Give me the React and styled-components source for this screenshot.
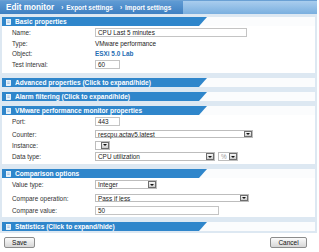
import styled, { createGlobalStyle } from "styled-components";

const GlobalStyle = createGlobalStyle`
  body {
    margin: 0;
    background: #fff;
    font-family: "Liberation Sans", Arial, sans-serif;
  }
`;

const Page = styled.div`
  width: 317px;
`;

const TitleBar = styled.div`
  display: flex;
  height: 14px;
  background: linear-gradient(#a9cdee, #7aafdf);
  border-top: 1px solid #6aa0d4;
  box-sizing: border-box;
`;

const TitleTab = styled.div`
  display: flex;
  align-items: center;
  width: 183px;
  padding-left: 6px;
  box-sizing: border-box;
  background: linear-gradient(#5f9bd4, #3f80c2);
  color: #fff;
  font-weight: bold;
`;

const Title = styled.span`
  font-size: 8.2px;
  margin-right: 7px;
`;

const NavLink = styled.span`
  font-size: 6.4px;
  margin-right: 7px;
  &::before {
    content: "›";
    margin-right: 3px;
  }
`;

const Panel = styled.div`
  display: flex;
  flex-direction: column;
  gap: 5px;
  background: #dde8f2;
  padding: 3px 2px 2px;
`;

const Section = styled.div`
  background: #fbfcfd;
`;

const Tab = styled.div`
  display: flex;
  align-items: center;
  gap: 4px;
  width: 205px;
  height: 9px;
  padding-left: 4px;
  box-sizing: border-box;
  background: #2f86cb;
  clip-path: polygon(0 0, 100% 0, calc(100% - 8px) 100%, 0 100%);
  color: #fff;
  font-weight: bold;
  font-size: 6.6px;
  white-space: nowrap;
`;

const Body = styled.div`
  padding: ${(p) => p.$pad || "1px 0 2px 10px"};
  background: #fff;
`;

const Row = styled.div`
  display: grid;
  grid-template-columns: 83px auto;
  align-items: center;
  height: ${(p) => p.$h || 10}px;
  font-size: 6.4px;
`;

const Label = styled.span`
  color: #333;
`;

const Value = styled.div`
  display: flex;
  align-items: center;
  gap: 3px;
  color: #222;
`;

const Link = styled.span`
  color: #1f6db3;
  font-weight: bold;
`;

const Input = styled.div`
  width: ${(p) => p.$w}px;
  height: 9px;
  border: 1px solid #c4c4c4;
  box-sizing: border-box;
  padding-left: 2px;
  display: flex;
  align-items: center;
  background: #fff;
  color: #222;
`;

const SelectBox = styled.div`
  width: ${(p) => p.$w}px;
  height: 8.5px;
  border: 1px solid #bdbdbd;
  box-sizing: border-box;
  padding-left: 2px;
  display: flex;
  align-items: center;
  justify-content: space-between;
  background: #fff;
  color: ${(p) => (p.$muted ? "#999" : "#222")};
`;

const DropBtn = styled.span`
  width: 8px;
  height: 6.5px;
  margin-right: 0.5px;
  box-sizing: border-box;
  border: 1px solid #6e6e6e;
  background: linear-gradient(#f6f6f6, #cdcdcd);
  display: flex;
  align-items: center;
  justify-content: center;
  &::after {
    content: "";
    border-left: 2px solid transparent;
    border-right: 2px solid transparent;
    border-top: 2px solid #111;
  }
`;

const Footer = styled.div`
  display: flex;
  justify-content: space-between;
  padding: 4px 10px 0 4px;
`;

const Button = styled.button`
  width: ${(p) => p.$w}px;
  height: 11px;
  padding: 0;
  border: 1px solid #8c8c8c;
  border-radius: 2px;
  background: linear-gradient(#fbfbfb, #d6d6d6);
  font-family: inherit;
  font-size: 6.5px;
  color: #111;
`;

function Icon() {
  return (
    <svg width="5" height="6" viewBox="0 0 5 6">
      <rect x="0.5" y="0.5" width="4" height="5" fill="#e9f1f9" stroke="#fff" strokeWidth="0.8" />
      <line x1="1.3" y1="2" x2="3.7" y2="2" stroke="#7aa7d4" strokeWidth="0.6" />
      <line x1="1.3" y1="3.5" x2="3.7" y2="3.5" stroke="#7aa7d4" strokeWidth="0.6" />
    </svg>
  );
}

function Select({ w, text, muted }) {
  return (
    <SelectBox $w={w} $muted={muted}>
      <span>{text}</span>
      <DropBtn />
    </SelectBox>
  );
}

function Header({ children }) {
  return (
    <Tab>
      <Icon />
      {children}
    </Tab>
  );
}

export default function App() {
  return (
    <Page>
      <GlobalStyle />
      <TitleBar>
        <TitleTab>
          <Title>Edit monitor</Title>
          <NavLink>Export settings</NavLink>
          <NavLink>Import settings</NavLink>
        </TitleTab>
      </TitleBar>
      <Panel>
        <Section>
          <Header>Basic properties</Header>
          <Body>
            <Row $h={11}>
              <Label>Name:</Label>
              <Value><Input $w={152}>CPU Last 5 minutes</Input></Value>
            </Row>
            <Row>
              <Label>Type:</Label>
              <Value>VMware performance</Value>
            </Row>
            <Row>
              <Label>Object:</Label>
              <Value><Link>ESXi 5.0 Lab</Link></Value>
            </Row>
            <Row $h={13}>
              <Label>Test interval:</Label>
              <Value><Input $w={25}>60</Input></Value>
            </Row>
          </Body>
        </Section>
        <Section>
          <Header>Advanced properties (Click to expand/hide)</Header>
        </Section>
        <Section>
          <Header>Alarm filtering (Click to expand/hide)</Header>
        </Section>
        <Section>
          <Header>VMware performance monitor properties</Header>
          <Body $pad="0 0 0 10px">
            <Row $h={12}>
              <Label>Port:</Label>
              <Value><Input $w={25}>443</Input></Value>
            </Row>
            <Row $h={14}>
              <Label>Counter:</Label>
              <Value><Select w={158} text="rescpu.actav5.latest" /></Value>
            </Row>
            <Row $h={8}>
              <Label>Instance:</Label>
              <Value><Select w={15} text="" /></Value>
            </Row>
            <Row $h={15}>
              <Label>Data type:</Label>
              <Value>
                <Select w={120} text="CPU utilization" />
                <Select w={20} text="%" muted />
              </Value>
            </Row>
          </Body>
        </Section>
        <Section>
          <Header>Comparison options</Header>
          <Body $pad="0 0 2px 10px">
            <Row $h={13}>
              <Label>Value type:</Label>
              <Value><Select w={62} text="Integer" /></Value>
            </Row>
            <Row $h={14}>
              <Label>Compare operation:</Label>
              <Value><Select w={154} text="Pass if less" /></Value>
            </Row>
            <Row $h={10}>
              <Label>Compare value:</Label>
              <Value><Input $w={124}>50</Input></Value>
            </Row>
          </Body>
        </Section>
        <Section>
          <Header>Statistics (Click to expand/hide)</Header>
        </Section>
      </Panel>
      <Footer>
        <Button $w={31}>Save</Button>
        <Button $w={37}>Cancel</Button>
      </Footer>
    </Page>
  );
}
